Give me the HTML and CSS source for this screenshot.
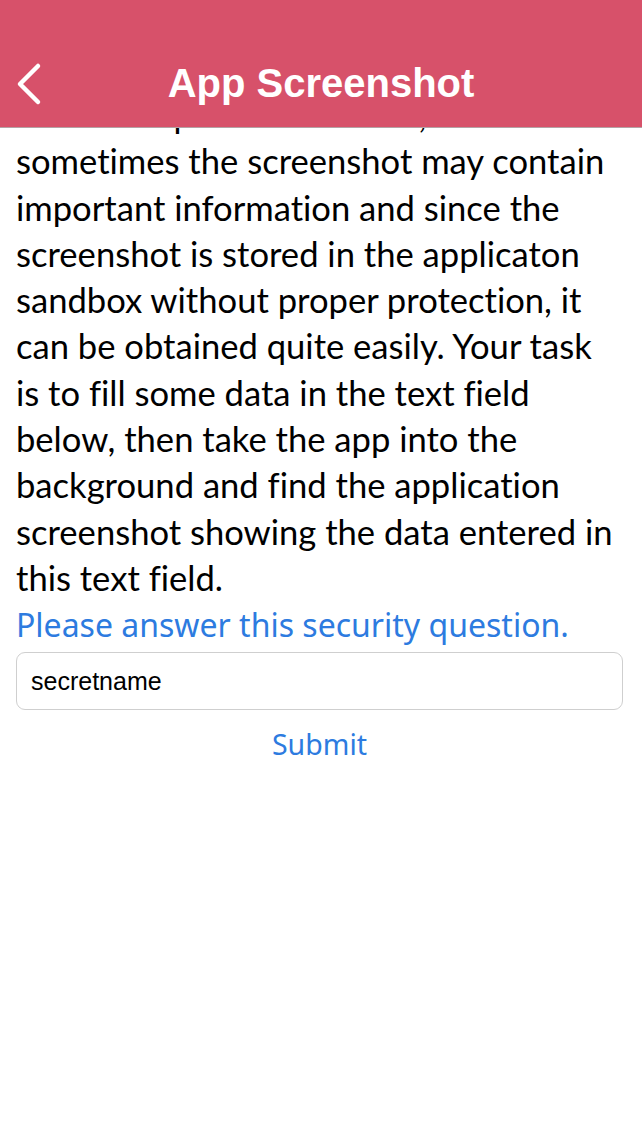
FILE: index.html
```html
<!DOCTYPE html>
<html>
<head>
<meta charset="utf-8">
<link rel="stylesheet" href="styles.css">
</head>
<body>
<div class="screen">
  <header class="navbar">
    <svg class="back" width="30" height="44" viewBox="0 0 30 44"><path d="M24 4 L6 22 L24 40" fill="none" stroke="#fff" stroke-width="4.5" stroke-linecap="round" stroke-linejoin="round"/></svg>
    <h1 class="title">App Screenshot</h1>
  </header>
  <main class="content">
    <p class="desc">which is a plus for the user, but<br>sometimes the screenshot may contain<br>important information and since the<br>screenshot is stored in the applicaton<br>sandbox without proper protection, it<br>can be obtained quite easily. Your task<br>is to fill some data in the text field<br>below, then take the app into the<br>background and find the application<br>screenshot showing the data entered in<br>this text field.</p>
    <p class="question">Please answer this security question.</p>
    <div class="field">secretname</div>
    <div class="submit">Submit</div>
  </main>
</div>
</body>
</html>
```

FILE: styles.css
```css
html, body {
  margin: 0;
  padding: 0;
  background: #fff;
}
.screen {
  width: 642px;
  height: 1134px;
  overflow: hidden;
  background: #fff;
  display: flex;
  flex-direction: column;
}
.navbar {
  flex: 0 0 128px;
  height: 128px;
  background: #d7516a;
  border-bottom: 1px solid #b3a2a5;
  box-sizing: border-box;
  display: flex;
  align-items: center;
  padding: 39px 0 0 0;
}
.back {
  margin-left: 14px;
  margin-top: 2px;
}
.title {
  margin: 0;
  flex: 1;
  margin-right: 44px;
  text-align: center;
  color: #fff;
  font-family: "Liberation Sans", Arial, sans-serif;
  font-weight: bold;
  font-size: 40px;
  line-height: 46px;
}
.content {
  flex: 1;
  overflow: hidden;
  padding: 0 19px 0 16px;
  display: flex;
  flex-direction: column;
}
.desc {
  margin: -36px 0 0 0;
  font-family: Lato, "Noto Sans", sans-serif;
  font-size: 34.6px;
  line-height: 46.3px;
  color: #000;
  white-space: nowrap;
  font-variant-ligatures: none;
  font-feature-settings: "liga" 0, "dlig" 0;
}
.question {
  margin: 0;
  font-family: "Noto Sans", Roboto, sans-serif;
  font-size: 32px;
  line-height: 48px;
  color: #2d7be0;
  white-space: nowrap;
}
.field {
  margin-top: 3px;
  height: 58px;
  box-sizing: border-box;
  border: 1.5px solid #cfcfcf;
  border-radius: 9px;
  padding-left: 14px;
  display: flex;
  align-items: center;
  font-family: "Liberation Sans", Arial, sans-serif;
  font-size: 25px;
  color: #000;
}
.submit {
  margin-top: 14px;
  text-align: center;
  font-family: "Noto Sans", Roboto, sans-serif;
  font-size: 28.5px;
  line-height: 40px;
  color: #2d7be0;
}
```
